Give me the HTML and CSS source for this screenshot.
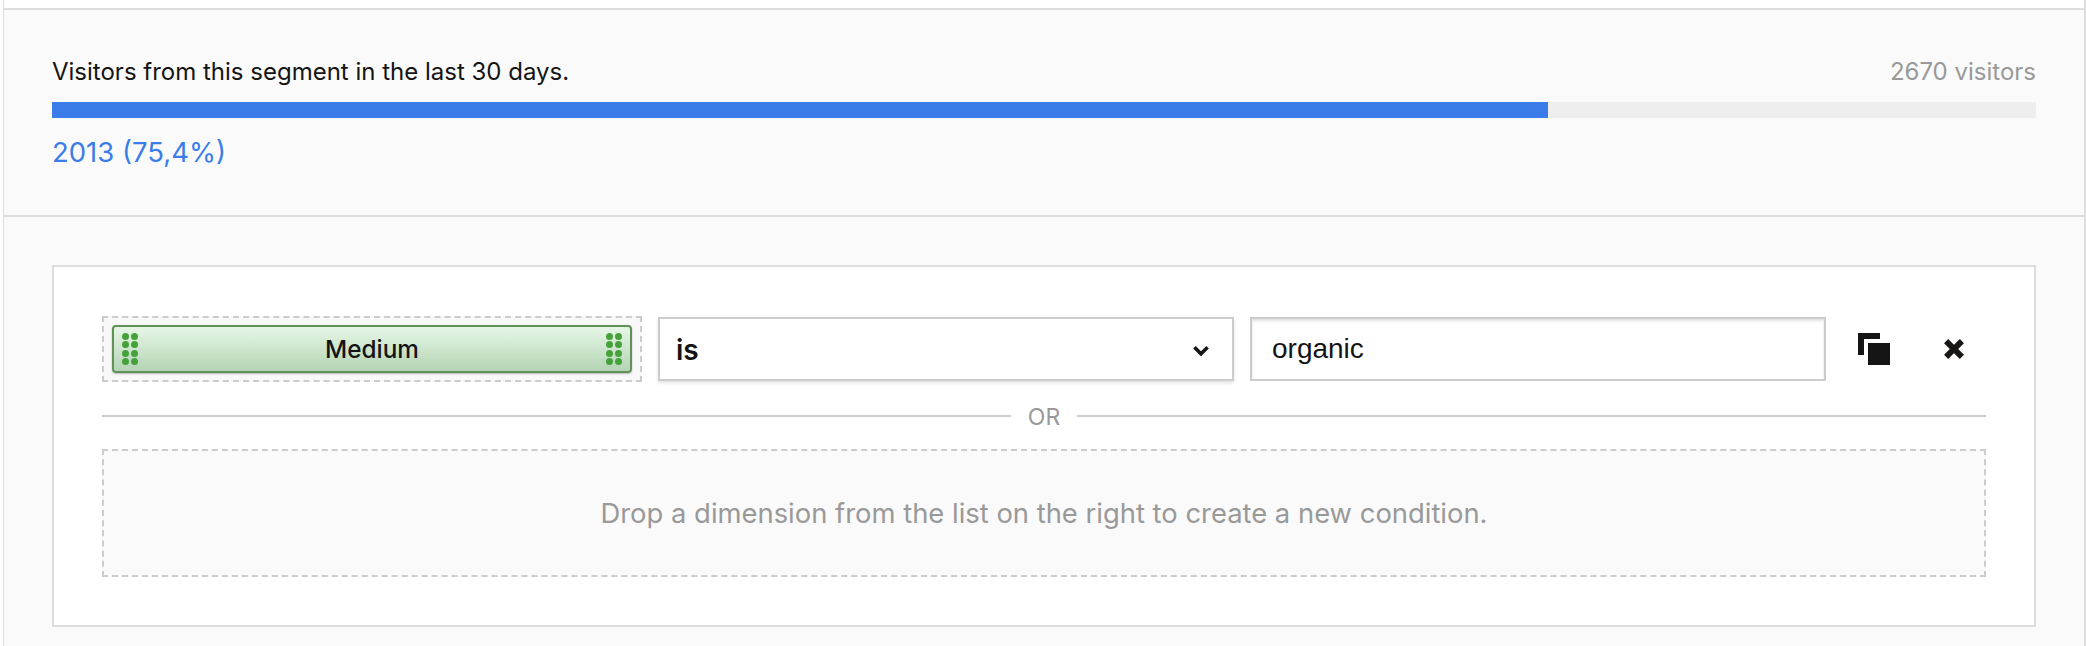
FILE: index.html
```html
<!DOCTYPE html>
<html lang="en">
<head>
<meta charset="utf-8">
<title>Segment</title>
<link rel="stylesheet" href="styles.css">
</head>
<body>
<div class="frame">
  <div class="top-strip"></div>
  <section class="stats">
    <div class="stats-head">
      <span class="stats-title">Visitors from this segment in the last 30 days.</span>
      <span class="stats-total">2670 visitors</span>
    </div>
    <div class="track"><div class="fill" style="width:75.4%"></div></div>
    <div class="stats-value">2013 (75,4%)</div>
  </section>
  <section class="builder">
    <div class="card">
      <div class="condition">
        <div class="slot">
          <div class="pill">
            <span class="grip"><i></i><i></i><i></i><i></i><i></i><i></i><i></i><i></i></span>
            <span class="pill-label">Medium</span>
            <span class="grip"><i></i><i></i><i></i><i></i><i></i><i></i><i></i><i></i></span>
          </div>
        </div>
        <div class="select">
          <span>is</span>
          <svg class="chevron" width="16" height="11" viewBox="0 0 16 11"><path d="M1.4 2.2 8 8.8 14.6 2.2" fill="none" stroke="#161616" stroke-width="3.6"/></svg>
        </div>
        <div class="input">organic</div>
        <div class="actions">
          <svg width="32" height="32" viewBox="0 0 32 32"><path d="M0 0H22V6H6V22H0Z" fill="#141414"/><rect x="10" y="10" width="22" height="22" fill="#141414"/></svg>
          <svg width="20" height="20" viewBox="0 0 20 20"><path d="M2.1 2.1 17.9 17.9M17.9 2.1 2.1 17.9" fill="none" stroke="#1a1614" stroke-width="5.8"/></svg>
        </div>
      </div>
      <div class="or"><span>OR</span></div>
      <div class="drop">Drop a dimension from the list on the right to create a new condition.</div>
    </div>
  </section>
</div>
</body>
</html>
```
FILE: styles.css
```css
* { box-sizing: border-box; }
html, body { margin: 0; padding: 0; background: #fff; }
body { height: 646px; overflow: hidden; font-family: Inter, "Liberation Sans", sans-serif; color: #141414; }
.frame { margin: 0 0 0 3px; border-left: 1px solid #ddd; border-right: 2px solid #ddd; height: 646px; }
.top-strip { height: 8px; background: #fff; }
.stats { height: 209px; background: #fafafa; border-top: 2px solid #ddd; border-bottom: 2px solid #ddd; padding: 44px 48px 0 48px; }
.stats-head { display: flex; justify-content: space-between; align-items: baseline; height: 48px; font-size: 24px; line-height: 36px; }
.stats-title { color: #141414; }
.stats-total { color: #999; }
.track { height: 16px; background: #eee; }
.fill { height: 100%; background: #3b7de8; }
.stats-value { margin-top: 14px; font-size: 27.5px; line-height: 40px; color: #3b7de8; }
.builder { height: 429px; background: #fafafa; padding: 48px 48px 0 48px; }
.card { height: 362px; background: #fff; border: 2px solid #ddd; padding: 49px 48px 0 48px; }
.condition { display: flex; align-items: center; height: 66px; }
.slot { width: 540px; height: 66px; background: #f8f8f8; border: 2px dashed #ccc; padding: 7px 8px; flex: none; }
.pill { display: flex; align-items: center; justify-content: space-between; height: 48px; border: 2px solid #5f9158; border-radius: 4px; background: linear-gradient(#e6f6e6, #b4d4b4); padding: 0 8px; box-shadow: 0 1px 2px rgba(0,0,0,.25); }
.pill-label { font-weight: 500; font-size: 24.3px; }
.grip { display: grid; grid-template-columns: 7px 7px; gap: 1.5px 1.7px; width: 15.7px; }
.grip i { width: 7px; height: 7px; border-radius: 50%; background: #45a23a; }
.select { display: flex; align-items: center; justify-content: space-between; width: 576px; height: 64px; margin-left: 16px; padding: 2px 23px 0 16px; border: 2px solid #ccc; background: #fff; box-shadow: 0 2px 3px rgba(0,0,0,.12); font-size: 28px; font-weight: 600; flex: none; }
.input { display: flex; align-items: center; width: 576px; height: 64px; margin-left: 16px; padding: 0 20px; border: 2px solid #ccc; background: #fff; box-shadow: inset 0 2px 3px rgba(0,0,0,.12); font-family: "Liberation Sans", sans-serif; font-size: 28px; flex: none; }
.actions { display: flex; align-items: center; margin-left: 32px; gap: 54px; }
.or { display: flex; align-items: center; gap: 17px; margin-top: 17px; height: 34px; color: #999; font-size: 23px; }
.or span { padding-top: 2px; }
.or::before, .or::after { content: ""; flex: 1; height: 2px; background: #ccc; }
.drop { display: flex; align-items: center; justify-content: center; height: 128px; margin-top: 16px; background: #fafafa; border: 2px dashed #ccc; color: #999; font-size: 27.4px; }
```
